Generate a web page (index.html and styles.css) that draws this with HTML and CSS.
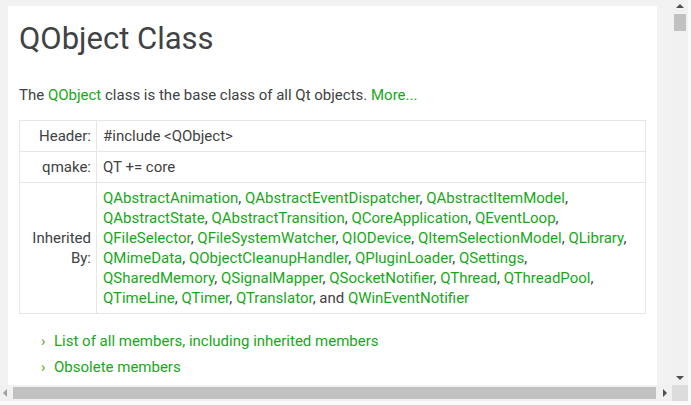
FILE: index.html
```html
<!DOCTYPE html>
<html>
<head>
<meta charset="utf-8">
<link rel="stylesheet" href="styles.css">
</head>
<body>
<div class="window">
  <div class="viewport">
    <div class="page">
      <h1 class="title">QObject Class</h1>
      <p class="intro">The <a href="#">QObject</a> class is the base class of all Qt objects. <a href="#">More...</a></p>
      <table class="summary">
        <tr><td class="label">Header:</td><td class="value">#include &lt;QObject&gt;</td></tr>
        <tr><td class="label">qmake:</td><td class="value">QT += core</td></tr>
        <tr><td class="label">Inherited By:</td><td class="value inherits"><a href="#">QAbstractAnimation</a>, <a href="#">QAbstractEventDispatcher</a>, <a href="#">QAbstractItemModel</a>,<br><a href="#">QAbstractState</a>, <a href="#">QAbstractTransition</a>, <a href="#">QCoreApplication</a>, <a href="#">QEventLoop</a>,<br><a href="#">QFileSelector</a>, <a href="#">QFileSystemWatcher</a>, <a href="#">QIODevice</a>, <a href="#">QItemSelectionModel</a>, <a href="#">QLibrary</a>,<br><a href="#">QMimeData</a>, <a href="#">QObjectCleanupHandler</a>, <a href="#">QPluginLoader</a>, <a href="#">QSettings</a>,<br><a href="#">QSharedMemory</a>, <a href="#">QSignalMapper</a>, <a href="#">QSocketNotifier</a>, <a href="#">QThread</a>, <a href="#">QThreadPool</a>,<br><a href="#">QTimeLine</a>, <a href="#">QTimer</a>, <a href="#">QTranslator</a>, and <a href="#">QWinEventNotifier</a></td></tr>
      </table>
      <ul class="links">
        <li><a href="#">List of all members, including inherited members</a></li>
        <li><a href="#">Obsolete members</a></li>
      </ul>
    </div>
  </div>
  <div class="vscroll">
    <span class="arrow up"></span>
    <div class="vtrack"><div class="vthumb"></div></div>
    <span class="arrow down"></span>
  </div>
  <div class="hscroll">
    <span class="arrow left"></span>
    <div class="htrack"><div class="hthumb"></div></div>
    <span class="arrow right"></span>
  </div>
  <div class="corner"></div>
</div>
</body>
</html>
```
FILE: styles.css
```css
html, body {
  margin: 0;
  padding: 0;
  background: #fafafa;
}
.window {
  display: grid;
  grid-template-columns: 672px 16px;
  grid-template-rows: 385px 16px;
  width: 688px;
}
.viewport {
  overflow: hidden;
  background: #f2f2f2;
  padding: 6px 0 0 8px;
  box-sizing: border-box;
}
.page {
  width: 649px;
  min-height: 500px;
  box-sizing: border-box;
  background: #fff;
  padding: 10px 11px 0 11px;
  font-family: Roboto, sans-serif;
  color: #404244;
  font-size: 15px;
  line-height: 20px;
}
a {
  color: #17a81a;
  text-decoration: none;
}
.title {
  margin: 0;
  font-size: 31px;
  line-height: 46px;
  font-weight: 400;
  color: #404244;
}
.intro {
  margin: 23px 0 0 0;
}
.summary {
  margin-top: 15px;
  width: 100%;
  table-layout: fixed;
  border-collapse: collapse;
  border: 1px solid #e6e6e6;
}
.summary td {
  border: 1px solid #e6e6e6;
  padding: 5px 6px;
  vertical-align: middle;
}
.summary .label {
  width: 70px;
  text-align: right;
  padding-left: 1px;
  padding-right: 5px;
}
.summary .inherits {
  white-space: nowrap;
}
.links {
  list-style: none;
  margin: 14px 0 0 0;
  padding: 0 0 0 35px;
}
.links li {
  line-height: 26px;
  display: flex;
  align-items: center;
}
.links li::before {
  content: "›";
  color: #5ea821;
  width: 12px;
  margin-left: -13px;
  margin-right: 1px;
  font-size: 15px;
}
.vscroll {
  background: #f1f1f1;
  display: flex;
  flex-direction: column;
  align-items: center;
}
.vtrack {
  flex: 1;
  width: 100%;
  padding: 0 2px;
  box-sizing: border-box;
}
.vthumb {
  height: 17px;
  background: #c1c1c1;
}
.hscroll {
  background: #f1f1f1;
  display: flex;
  align-items: center;
}
.htrack {
  flex: 1;
  height: 100%;
  padding: 2px 0;
  box-sizing: border-box;
}
.hthumb {
  height: 100%;
  margin: 0 2px 0 0;
  width: 643px;
  background: #c1c1c1;
}
.corner {
  background: #dcdcdc;
}
.arrow {
  display: block;
  width: 0;
  height: 0;
  flex: none;
}
.arrow.up {
  margin: 4px 0 6px;
  border-left: 4px solid transparent;
  border-right: 4px solid transparent;
  border-bottom: 4px solid #505050;
}
.arrow.down {
  margin: 6px 0 5px;
  border-left: 4px solid transparent;
  border-right: 4px solid transparent;
  border-top: 4px solid #505050;
}
.arrow.left {
  margin: 0 6px 0 3px;
  border-top: 4px solid transparent;
  border-bottom: 4px solid transparent;
  border-right: 4px solid #a0a0a0;
}
.arrow.right {
  margin: 0 5px 0 4px;
  border-top: 4px solid transparent;
  border-bottom: 4px solid transparent;
  border-left: 4px solid #505050;
}
```
